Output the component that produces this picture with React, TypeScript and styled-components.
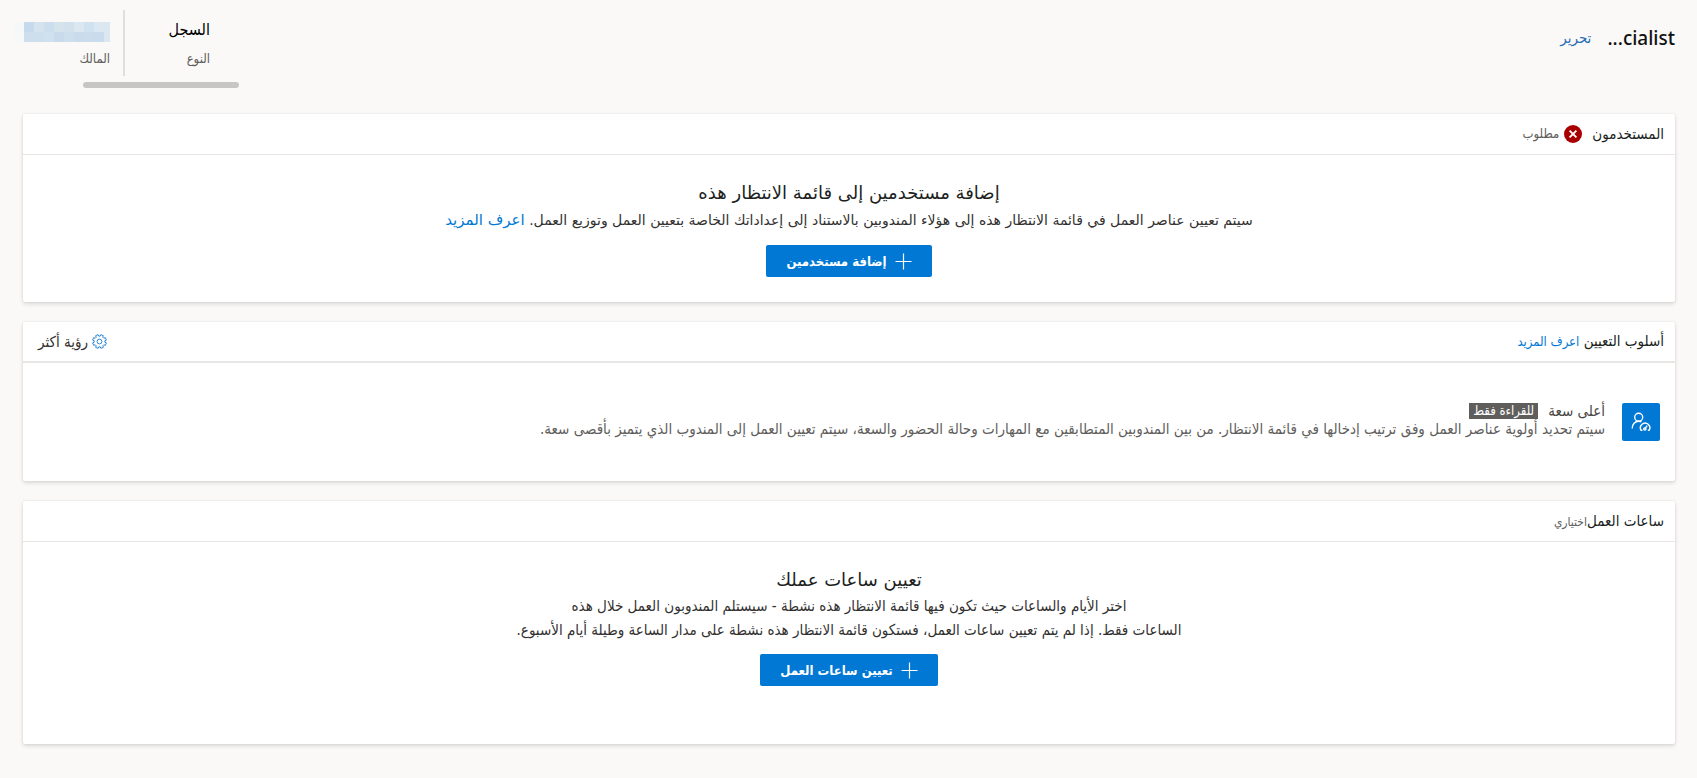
import React from "react";
import styled, { createGlobalStyle } from "styled-components";

const condensed = `"DejaVu Sans Condensed", "DejaVu Sans", sans-serif`;
const regular = `"DejaVu Sans", sans-serif`;

const Global = createGlobalStyle`
  * { box-sizing: border-box; }
  body {
    margin: 0;
    background: #faf9f8;
    color: #323130;
    font-family: ${condensed};
    font-size: 15px;
    line-height: 20px;
  }
  h1, h2, h3, p, dl, dt, dd { margin: 0; }
`;

const Page = styled.div`
  padding: 10px 22px 34px 23px;
`;

const TopBar = styled.header`
  display: flex;
  justify-content: space-between;
  align-items: flex-start;
  height: 104px;
`;

const TitleGroup = styled.div`
  display: flex;
  align-items: center;
  gap: 16px;
  padding-top: 14px;
`;

const PageTitle = styled.h1`
  color: #111;
  font-family: "Noto Sans", sans-serif;
  font-size: 19px;
  line-height: 28px;
  font-weight: 500;
`;

const Link = styled.a<{ $size?: number; $color?: string }>`
  color: ${(p) => p.$color ?? "#0078d4"};
  font-size: ${(p) => p.$size ?? 13}px;
  text-decoration: none;
`;

const Facts = styled.div`
  display: flex;
  flex-direction: column;
  gap: 6px;
  width: 216px;
`;

const FactList = styled.dl`
  display: flex;
  height: 66px;
`;

const Fact = styled.div`
  display: flex;
  flex-direction: column-reverse;
  justify-content: flex-end;
  width: 114px;
  padding: 8px 29px 0 0;

  & + & {
    width: 102px;
    padding: 8px 13px 0 0;
    border-right: 2px solid #e1dfdd;
  }
`;

const FactLabel = styled.dt`
  color: #605e5c;
  font-size: 13px;
  line-height: 16px;
  padding-top: 9px;
`;

const FactValue = styled.dd`
  color: #000;
  font-size: 16px;
  line-height: 24px;
`;

const Mosaic = styled.div`
  display: grid;
  grid-template-columns: 6px repeat(9, 10px);
  grid-auto-rows: 10px;
  width: 96px;
  height: 24px;
  padding-top: 4px;
`;

const MosaicCell = styled.span<{ $color: string }>`
  background: ${(p) => p.$color};
`;

const ScrollThumb = styled.div`
  width: 156px;
  height: 6px;
  border-radius: 3px;
  background: #c8c6c4;
`;

const Cards = styled.main`
  display: flex;
  flex-direction: column;
  gap: 20px;
`;

const Card = styled.section<{ $minHeight: number }>`
  min-height: ${(p) => p.$minHeight}px;
  background: #fff;
  border-radius: 2px;
  box-shadow: 0 2px 4px rgba(0, 0, 0, 0.13), 0 0 2px rgba(0, 0, 0, 0.1);
`;

const CardHeader = styled.div<{ $rule?: number }>`
  display: flex;
  justify-content: space-between;
  align-items: center;
  height: 41px;
  padding: 0 11px 0 15px;
  border-bottom: ${(p) => p.$rule ?? 1}px solid #e8e6e4;
`;

const HeaderText = styled.div`
  white-space: nowrap;
`;

const CardTitle = styled.h2`
  display: inline;
  font-size: 15px;
  font-weight: 400;
  color: #201f1e;
`;

const Hint = styled.span<{ $size?: number }>`
  color: #605e5c;
  font-size: ${(p) => p.$size ?? 12}px;
`;

const Status = styled.div`
  display: flex;
  align-items: center;
  gap: 5px;

  ${CardTitle} { margin-left: 5px; }
`;

const MoreButton = styled.button`
  display: flex;
  align-items: center;
  gap: 4px;
  padding: 0;
  border: 0;
  background: none;
  color: #323130;
  font: inherit;
`;

const EmptyState = styled.div`
  display: flex;
  flex-direction: column;
  align-items: center;
  padding-top: 24px;
  text-align: center;
`;

const EmptyTitle = styled.h3`
  font-family: ${regular};
  font-size: 18px;
  line-height: 28px;
  font-weight: 400;
  color: #201f1e;
`;

const EmptyText = styled.p<{ $wide?: boolean }>`
  font-family: ${(p) => (p.$wide ? regular : condensed)};
  font-size: ${(p) => (p.$wide ? 14 : 15)}px;
  line-height: ${(p) => (p.$wide ? 26 : 24)}px;
`;

const PrimaryButton = styled.button`
  display: flex;
  align-items: center;
  gap: 8px;
  height: 32px;
  margin-top: 12px;
  padding: 0 20px;
  border: 0;
  border-radius: 2px;
  background: #0078d4;
  color: #fff;
  font-family: ${condensed};
  font-size: 13px;
  font-weight: 700;
`;

const Method = styled.div`
  display: flex;
  gap: 17px;
  padding: 40px 15px 0;
`;

const MethodIcon = styled.div`
  display: grid;
  place-items: center;
  flex: none;
  width: 38px;
  height: 38px;
  border-radius: 2px;
  background: #0078d4;
`;

const MethodBody = styled.div`
  color: #605e5c;
`;

const MethodName = styled.div`
  display: flex;
  align-items: center;
  gap: 10px;
  height: 16px;
`;

const MethodTitle = styled.h3`
  font-size: 15px;
  line-height: 16px;
  font-weight: 400;
  color: #484644;
`;

const Tag = styled.span`
  height: 16px;
  padding: 0 4px;
  background: #605e5c;
  color: #fff;
  font-size: 13px;
  line-height: 16px;
`;

const mosaic = [
  "#dce8f1", "#dce8f1", "#d0e1ef", "#dce8f1", "#d3e1ec", "#d5e3ed", "#cbdeee", "#d5e3ee", "#c5daeb", "#f5f8f8",
  "#dce8f1", "#c9dbec", "#cbdced", "#c9dbec", "#cddfec", "#c8daeb", "#cfe0ee", "#cddfed", "#cddfed", "#f7f9f9",
];

const Plus = () => (
  <svg width="17" height="17" viewBox="0 0 17 17" stroke="#fff" fill="none" aria-hidden="true">
    <path d="M8.5 .5v16M.5 8.5h16" strokeWidth="1.2" />
  </svg>
);

const ErrorIcon = () => (
  <svg width="18" height="18" viewBox="0 0 18 18" aria-hidden="true">
    <circle cx="9" cy="9" r="9" fill="#a80000" />
    <path d="M5.6 5.6l6.8 6.8M12.4 5.6l-6.8 6.8" stroke="#fff" strokeWidth="1.8" />
  </svg>
);

const gearTeeth = Array.from({ length: 8 }, (_, i) => {
  const at = (r: number, deg: number) => {
    const a = ((i * 45 + 22.5 + deg) * Math.PI) / 180;
    return `${(7.5 + r * Math.sin(a)).toFixed(2)} ${(7.5 - r * Math.cos(a)).toFixed(2)}`;
  };
  return `${i ? "L" : "M"}${at(5.4, -15)}L${at(7, -11)}L${at(7, 11)}L${at(5.4, 15)}`;
}).join("");

const Gear = () => (
  <svg width="15" height="15" viewBox="0 0 15 15" fill="none" stroke="#2b88d8" aria-hidden="true">
    <path d={`${gearTeeth}Z`} />
    <circle cx="7.5" cy="7.5" r="2.4" />
  </svg>
);

const AgentIcon = () => (
  <svg width="20" height="20" viewBox="0 0 20 20" fill="none" stroke="#fff" strokeWidth="1.4" aria-hidden="true">
    <circle cx="7.7" cy="5.2" r="4" />
    <path d="M1.2 16.4C1.2 12.2 4 9.3 7.7 9.3c1 0 1.9.2 2.7.6" />
    <path d="M11.4 18.3h-1.3a4.7 4.7 0 1 1 8 0h-1.3" />
    <circle cx="13.8" cy="17" r="1.1" />
    <path d="M14.4 16.1l1.8-2.5" />
  </svg>
);

export default function App() {
  return (
    <>
      <Global />
      <Page dir="rtl" lang="ar">
        <TopBar>
          <TitleGroup>
            <PageTitle>cialist...</PageTitle>
            <Link href="#edit" $size={15} $color="#2b6cb5">تحرير</Link>
          </TitleGroup>
          <Facts>
            <FactList>
              <Fact>
                <FactLabel>النوع</FactLabel>
                <FactValue>السجل</FactValue>
              </Fact>
              <Fact>
                <FactLabel>المالك</FactLabel>
                <FactValue>
                  <Mosaic>
                    {mosaic.map((c, i) => <MosaicCell key={i} $color={c} />)}
                  </Mosaic>
                </FactValue>
              </Fact>
            </FactList>
            <ScrollThumb />
          </Facts>
        </TopBar>

        <Cards>
          <Card $minHeight={188}>
            <CardHeader>
              <Status>
                <CardTitle>المستخدمون</CardTitle>
                <ErrorIcon />
                <Hint $size={13}>مطلوب</Hint>
              </Status>
            </CardHeader>
            <EmptyState>
              <EmptyTitle>إضافة مستخدمين إلى قائمة الانتظار هذه</EmptyTitle>
              <EmptyText $wide>
                سيتم تعيين عناصر العمل في قائمة الانتظار هذه إلى هؤلاء المندوبين بالاستناد إلى إعداداتك الخاصة بتعيين العمل وتوزيع العمل.{" "}
                <Link href="#users" $size={15}>اعرف المزيد</Link>
              </EmptyText>
              <PrimaryButton type="button"><Plus />إضافة مستخدمين</PrimaryButton>
            </EmptyState>
          </Card>

          <Card $minHeight={159}>
            <CardHeader $rule={2}>
              <HeaderText>
                <CardTitle>أسلوب التعيين</CardTitle>{" "}
                <Link href="#method">اعرف المزيد</Link>
              </HeaderText>
              <MoreButton type="button"><Gear />رؤية أكثر</MoreButton>
            </CardHeader>
            <Method>
              <MethodIcon><AgentIcon /></MethodIcon>
              <MethodBody>
                <MethodName>
                  <MethodTitle>أعلى سعة</MethodTitle>
                  <Tag>للقراءة فقط</Tag>
                </MethodName>
                <p>سيتم تحديد أولوية عناصر العمل وفق ترتيب إدخالها في قائمة الانتظار. من بين المندوبين المتطابقين مع المهارات وحالة الحضور والسعة، سيتم تعيين العمل إلى المندوب الذي يتميز بأقصى سعة.</p>
              </MethodBody>
            </Method>
          </Card>

          <Card $minHeight={243}>
            <CardHeader>
              <HeaderText><CardTitle>ساعات العمل</CardTitle><Hint>اختياري</Hint></HeaderText>
            </CardHeader>
            <EmptyState>
              <EmptyTitle>تعيين ساعات عملك</EmptyTitle>
              <EmptyText>
                اختر الأيام والساعات حيث تكون فيها قائمة الانتظار هذه نشطة - سيستلم المندوبون العمل خلال هذه<br />
                الساعات فقط. إذا لم يتم تعيين ساعات العمل، فستكون قائمة الانتظار هذه نشطة على مدار الساعة وطيلة أيام الأسبوع.
              </EmptyText>
              <PrimaryButton type="button"><Plus />تعيين ساعات العمل</PrimaryButton>
            </EmptyState>
          </Card>
        </Cards>
      </Page>
    </>
  );
}
